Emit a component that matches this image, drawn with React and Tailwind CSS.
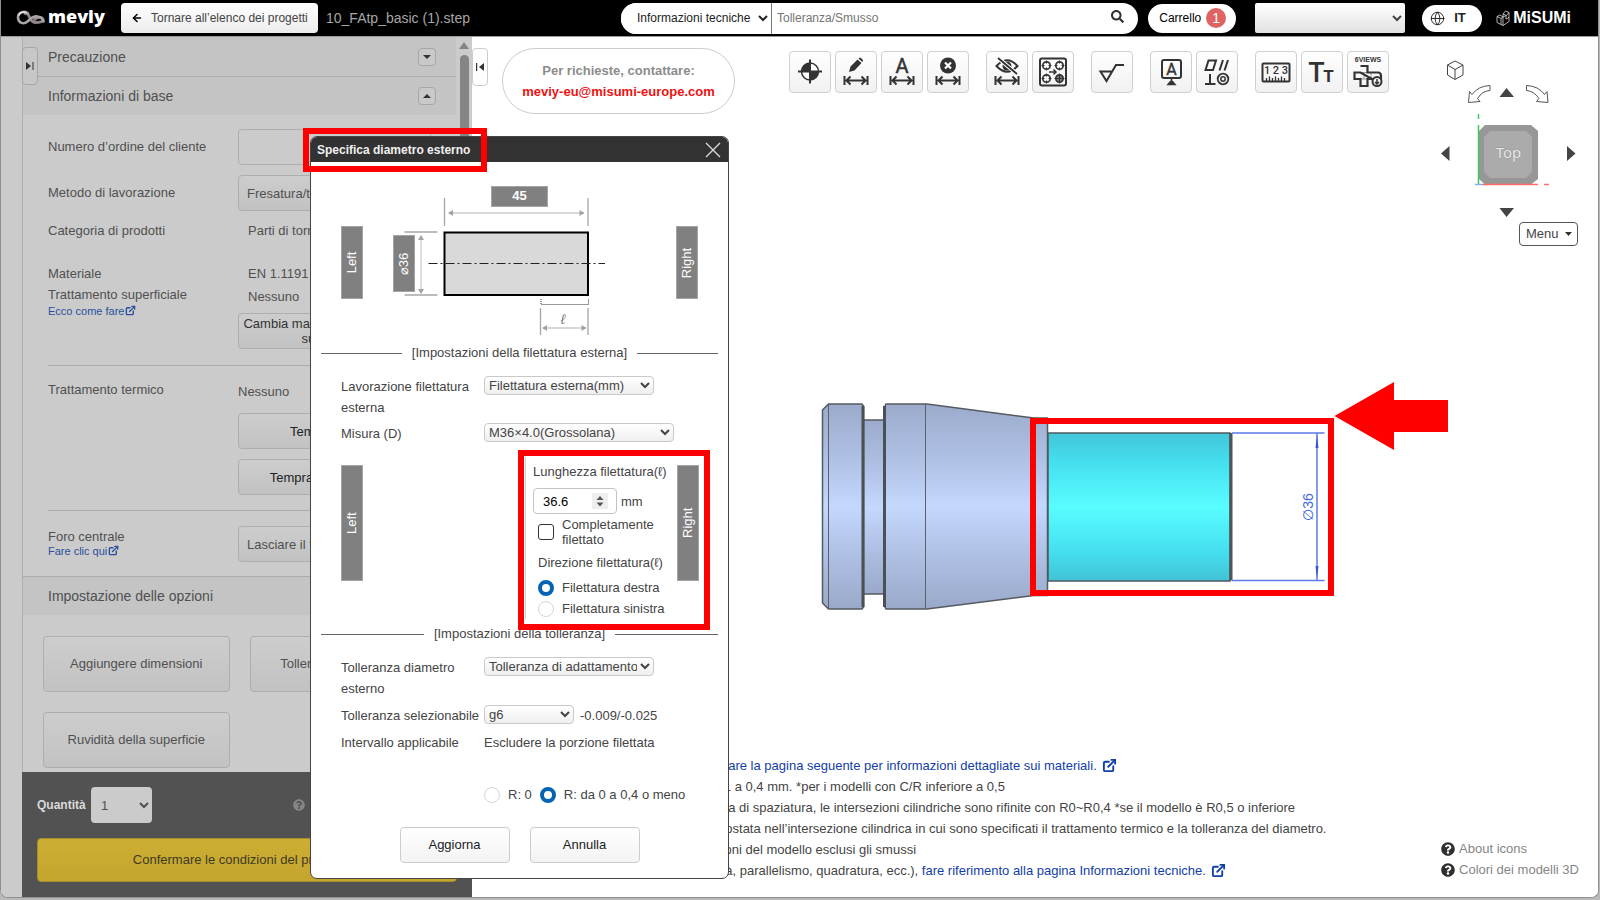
import React, { useState } from 'react'
import { Globe, ArrowLeft, ExternalLink } from 'lucide-react'
import { FaQuestionCircle, FaSearch } from 'react-icons/fa'

const softButton = 'border border-[#aeaeae] rounded-sm bg-linear-to-b from-[#cdcdcd] to-[#c2c2c2] text-[13px]'
const dialogSelect = 'h-[19px] border border-[#c9c9c9] rounded-sm bg-linear-to-b from-white to-[#efefef] text-[13px] leading-4 text-[#444]'
const radio = 'appearance-none size-4 shrink-0 rounded-full border border-[#d5d5d5] bg-white checked:border-4 checked:border-[#0463b3]'

export default function App() {
    return (
        <div className="h-screen bg-[#b9b9b9] pb-[2px] pr-px font-['Liberation_Sans',Arial,sans-serif] text-[13px] text-[#444]">
            <div className="relative flex flex-col h-full overflow-hidden rounded-b-lg border-l border-r border-b border-[#8f8f8f] bg-white">
                <Header />
                <div className="flex flex-1 min-h-0">
                    <Sidebar />
                    <Canvas />
                </div>
                <DiameterDialog />
            </div>
        </div>
    )
}

function Header() {
    return (
        <header className="flex items-center h-[37px] shrink-0 border-b border-[#9a9a9a] bg-black pl-[15px] pr-[27px]">
            <div className="flex items-center w-[105px] text-white">
                <svg viewBox="0 0 30 16" className="w-[30px] h-4" fill="none">
                    <path d="M9 3.500C14.500 2.500 13 12.500 19 12.500C23 12.500 27.500 12 27 9.500C26 6.500 22 7 18.500 9.500" stroke="#8d8589" strokeWidth="2.800" strokeLinecap="round" />
                    <path d="M12 3.500C9 .8 2 1.500 2 7.500C2.200 13.500 8 14.500 11.500 11.500C14.500 9 17 5.500 21.500 6.500C25 7 27 9 27.500 11.500" stroke="#aaa3a7" strokeWidth="2.600" strokeLinecap="round" />
                    <path d="M3 5C4 2 8 1.500 10 2.500" stroke="#e8e4e6" strokeWidth="1.500" strokeLinecap="round" />
                </svg>
                <span className="ml-[2px] mb-1 font-['Open_Sans',sans-serif] text-lg leading-6 font-extrabold">meviy</span>
            </div>
            <button className="flex items-center h-[30px] w-[197px] rounded-sm bg-linear-to-b from-white to-[#ececec] pl-[10px] text-xs text-[#444] whitespace-nowrap">
                <ArrowLeft className="w-3 h-4 mr-2 text-black" strokeWidth={3} />
                Tornare all’elenco dei progetti
            </button>
            <span className="ml-2 w-[295px] shrink-0 text-sm text-[#a6a6a6]">10_FAtp_basic (1).step</span>
            <div className="flex items-center flex-1 h-[31px] rounded-full bg-white text-xs overflow-hidden">
                <select aria-label="Ambito" className="h-full w-[151px] bg-white border-r border-[#777] pl-3 text-[#222]">
                    <option>Informazioni tecniche</option>
                </select>
                <input aria-label="Cerca" defaultValue="Tolleranza/Smusso" className="flex-1 h-full min-w-0 pl-[5px] text-[#757575] outline-none" />
                <button aria-label="Avvia ricerca" className="mr-[14px] mb-1">
                    <FaSearch className="size-[13px] text-[#333]" />
                </button>
            </div>
            <button className="ml-[10px] flex items-center h-[29px] w-[88px] rounded-full bg-white pl-[11px] text-xs text-black">
                Carrello
                <span className="ml-[5px] flex items-center justify-center size-5 rounded-full bg-[#e06363] text-white text-sm">1</span>
            </button>
            <select aria-label="Account" className="ml-[19px] h-[30px] w-[150px] rounded-xs bg-linear-to-b from-white to-[#e2e2e2] text-xs">
                <option></option>
            </select>
            <button className="ml-[17px] flex items-center h-[27px] w-[60px] rounded-full bg-white pl-2 text-[13px] font-bold text-[#222]">
                <Globe className="size-[15px] mr-[9px]" strokeWidth={1.5} />
                IT
            </button>
            <div className="ml-[14px] flex items-center text-white">
                <svg viewBox="0 0 14 17" className="w-[14px] h-[17px] mr-[3px]" fill="none" stroke="#ddd" strokeWidth=".8">
                    <path d="M1 6.500L4 5L7 7V15.500L1 12.500ZM1 6.500L5 8.500V14.500M7 7L10 5.500V9L13 7.500V11.500L7 15.500M7 4L9.500 1L13 2.500V7.500M7 4V7M7 4L10.500 5.500L13 2.500M5 8.500L7 7" />
                </svg>
                <span className="text-base leading-5 font-bold">MiSUMi</span>
            </div>
        </header>
    )
}

function HelpLink({ href, className, children }) {
    return (
        <a href={href} className={className}>
            {children}
            <ExternalLink className="inline-block size-[11px] ml-px align-[-1px]" strokeWidth={3} />
        </a>
    )
}

function SectionBar({ title, open, first }) {
    return (
        <div className={`flex items-center justify-between h-[39px] bg-[#c4c4c4] pl-[25px] pr-5 text-sm ${first ? '' : 'border-t border-[#acacac]'}`}>
            <h2>{title}</h2>
            <button aria-label={title} className="flex items-center justify-center size-[18px] rounded-sm border border-[#a6a6a6] bg-[#c9c9c9]">
                <svg viewBox="0 0 8 4" className="w-2 h-1"><path d={open ? 'M0 4L4 0L8 4Z' : 'M0 0L4 4L8 0Z'} fill="#333" /></svg>
            </button>
        </div>
    )
}

function Sidebar() {
    return (
        <aside className="flex w-[471px] shrink-0 bg-[#cbcbcb] text-[#505050]">
            <div className="w-[21px] shrink-0" />
            <div className="relative flex flex-col flex-1 min-w-0">
                <button aria-label="Espandi" className="absolute left-0 top-[10px] z-10 flex items-center justify-center w-4 h-[38px] rounded-sm border border-[#a6a6a6] bg-[#c7c7c7]">
                    <svg viewBox="0 0 8 8" className="size-2"><path d="M0 0L5 4L0 8ZM6.500 0H7.500V8H6.500Z" fill="#333" /></svg>
                </button>
                <div className="flex flex-1 min-h-0">
                    <div className="flex-1 min-w-0 overflow-hidden border-l border-[#b0b0b0]">
                        <SectionBar title="Precauzione" first />
                        <SectionBar title="Informazioni di base" open />
                        <div className="ml-[25px] mr-[25px] pt-[14px]">
                            <div className="flex items-center justify-between">
                                <label htmlFor="order">Numero d’ordine del cliente</label>
                                <input id="order" className="w-[193px] h-9 border border-[#aeaeae] rounded-sm" />
                            </div>
                            <div className="mt-[10px] flex items-center justify-between">
                                <label htmlFor="method">Metodo di lavorazione</label>
                                <select id="method" className={`w-[193px] h-9 pl-1 ${softButton}`}><option>Fresatura/tornitura</option></select>
                            </div>
                            <div className="mt-[9px] flex leading-[21px]">
                                <span className="w-[200px]">Categoria di prodotti</span>
                                <span>Parti di tornitura</span>
                            </div>
                            <div className="mt-[22px] flex leading-[21px]">
                                <span className="w-[200px]">Materiale</span>
                                <span>EN 1.1191 (C45E)</span>
                            </div>
                            <div className="flex justify-between">
                                <div className="w-[190px]">
                                    <div className="leading-[21px]">Trattamento superficiale</div>
                                    <HelpLink href="#superficie" className="block text-[11px] leading-3 text-[#2a4f9c]">Ecco come fare</HelpLink>
                                </div>
                                <div className="w-[193px]">
                                    <div className="pl-[10px] pt-[2px] leading-[21px]">Nessuno</div>
                                    <button className={`mt-[6px] w-full h-9 px-1 leading-[15px] whitespace-nowrap text-[#333] ${softButton}`}>
                                        Cambia materiale e trattamento<br />superficiale
                                    </button>
                                </div>
                            </div>
                            <div className="mt-4 border-t border-[#acacac] pt-[13px] flex justify-between leading-[21px]">
                                <span>Trattamento termico</span>
                                <div className="w-[193px] flex flex-col">
                                    <span className="pt-[2px]">Nessuno</span>
                                    <button className={`mt-[11px] h-9 text-[#222] ${softButton}`}>Tempra globale</button>
                                    <button className={`mt-[10px] h-9 text-[#222] ${softButton}`}>Tempra alta frequenza</button>
                                </div>
                            </div>
                            <div className="mt-[15px] border-t border-[#acacac] pt-[15px] flex items-center justify-between">
                                <div>
                                    <label htmlFor="hole" className="block leading-[15px]">Foro centrale</label>
                                    <HelpLink href="#foro" className="block text-[11px] leading-[15px] text-[#2a4f9c]">Fare clic qui</HelpLink>
                                </div>
                                <select id="hole" className={`w-[193px] h-9 pl-1 ${softButton}`}><option>Lasciare il foro centrale</option></select>
                            </div>
                        </div>
                        <div className="mt-[14px]">
                            <SectionBar title="Impostazione delle opzioni" open />
                        </div>
                        <div className="grid grid-cols-2 gap-5 px-5 pt-[21px]">
                            <button className={`h-14 ${softButton}`}>Aggiungere dimensioni</button>
                            <button className={`h-14 ${softButton}`}>Tolleranza dimensioni</button>
                            <button className={`h-14 ${softButton}`}>Ruvidità della superficie</button>
                        </div>
                    </div>
                    <div className="flex flex-col items-center w-4 pt-[5px]">
                        <svg viewBox="0 0 10 7" className="w-[10px] h-[7px]"><path d="M0 7L5 0L10 7Z" fill="#858585" /></svg>
                        <div className="mt-[6px] w-[9px] h-1/2 rounded-full bg-[#858585]" />
                    </div>
                </div>
                <div className="bg-[#525252] px-[15px] pt-[15px] pb-[15px]">
                    <div className="flex items-center">
                        <label htmlFor="qty" className="w-[54px] text-xs font-bold text-[#dadada]">Quantità</label>
                        <select id="qty" className="w-[61px] h-9 rounded-sm bg-[#cbcbcb] pl-[6px] pr-1 text-[13px]"><option>1</option></select>
                        <FaQuestionCircle className="ml-[141px] size-3 text-[#858585]" />
                    </div>
                    <button className="mt-[15px] block w-full h-11 rounded-sm border border-[#a68f28] bg-linear-to-b from-[#ccae33] to-[#c4a630] text-[13px] text-[#3f3a22]">
                        Confermare le condizioni del preventivo
                    </button>
                </div>
            </div>
        </aside>
    )
}

function Canvas() {
    return (
        <main className="relative flex flex-col flex-1 min-w-0 overflow-hidden bg-white">
            <div className="flex items-start pt-[11px]">
                <button aria-label="Comprimi" className="flex items-center justify-center w-4 h-[38px] rounded-sm border border-[#ccc] bg-white">
                    <svg viewBox="0 0 8 8" className="size-2"><path d="M8 0L3 4L8 8ZM0 0H1.200V8H0Z" fill="#333" /></svg>
                </button>
                <div className="ml-[14px] w-[233px] h-[66px] rounded-full border border-[#ccc] pt-[11px] text-center font-bold leading-[21px]">
                    <p className="text-[#8c8c8c]">Per richieste, contattare:</p>
                    <a href="mailto:meviy-eu@misumi-europe.com" className="text-[#ee1111]">meviy-eu@misumi-europe.com</a>
                </div>
                <Toolbar />
            </div>

            <ViewCube />
            <Model />

            <div className="mt-auto mb-4 ml-[215px] leading-[21px] whitespace-nowrap">
                <p>
                    <NoteLink href="#materiali">consultare la pagina seguente per informazioni dettagliate sui materiali.</NoteLink>
                </p>
                <p>C/R 0,1 a 0,4 mm. *per i modelli con C/R inferiore a 0,5</p>
                <p>apertura di spaziatura, le intersezioni cilindriche sono rifinite con R0~R0,4 *se il modello è R0,5 o inferiore</p>
                <p>va impostata nell’intersezione cilindrica in cui sono specificati il trattamento termico e la tolleranza del diametro.</p>
                <p>variazioni del modello esclusi gli smussi</p>
                <p>
                    linearità, parallelismo, quadratura, ecc.),{' '}
                    <NoteLink href="#tecniche">fare riferimento alla pagina Informazioni tecniche.</NoteLink>
                </p>
            </div>

            <div className="absolute right-[19px] bottom-[17px] leading-[21px] text-[#858585]">
                <a href="#icone" className="flex items-center gap-1"><FaQuestionCircle className="size-[14px] text-[#2e2e2e]" />About icons</a>
                <a href="#colori" className="flex items-center gap-1"><FaQuestionCircle className="size-[14px] text-[#2e2e2e]" />Colori dei modelli 3D</a>
            </div>
        </main>
    )
}

function NoteLink({ href, children }) {
    return (
        <a href={href} className="text-[#1240a8]">
            {children}
            <ExternalLink className="inline-block size-[15px] ml-[5px] align-[-3px]" strokeWidth={3} />
        </a>
    )
}

/* width arrow shared by the dimension tools */
const Span = () => (
    <path d="M9.500 25V34M32.500 25V34M12 29.500H30M15.500 25.500L11.500 29.500L15.500 33.500M26.500 25.500L30.500 29.500L26.500 33.500" fill="none" stroke="#333" strokeWidth="2" />
)

const TOOL_GROUPS = [
    [
        { label: 'Origine', icon: <><circle cx="21" cy="20.500" r="8.500" fill="#fff" stroke="#333" strokeWidth="1.500" /><path d="M21 20.500V12A8.500 8.500 0 0 0 12.500 20.500ZM21 20.500V29A8.500 8.500 0 0 0 29.500 20.500Z" fill="#333" /><path d="M21 8.500V32.500M9 20.500H33" stroke="#333" strokeWidth="2" /></> },
        { label: 'Modifica dimensione', icon: <><path d="M14 21L15.500 15.500L22.500 8.500L26.500 12L19.500 19.500ZM23.500 7.500L25 6.500Q26 6.500 28 9Q28 10 27.300 11Z" fill="#333" /><Span /></> },
        { label: 'Testo dimensione', icon: <><text x="21" y="21.500" textAnchor="middle" fontFamily="Roboto" fontSize="20" fill="#333" stroke="#333" strokeWidth=".5">A</text><Span /></> },
        { label: 'Elimina dimensione', icon: <><circle cx="21" cy="14.500" r="8" fill="#333" /><path d="M18 11.500L24 17.500M24 11.500L18 17.500" stroke="#fff" strokeWidth="2.200" /><Span /></> },
    ],
    [
        { label: 'Nascondi dimensione', icon: <><path d="M10.500 15Q21 3.500 31.500 15Q21 26.500 10.500 15Z" fill="none" stroke="#333" strokeWidth="2" /><circle cx="21" cy="15" r="4.500" fill="#333" /><path d="M12 7L31 23" stroke="#fff" strokeWidth="4" /><path d="M12 7L31 23" stroke="#333" strokeWidth="1.800" /><Span /></> },
        { label: 'Gruppo fori', icon: <><rect x="8" y="7.500" width="26" height="27" rx="2" fill="none" stroke="#333" strokeWidth="2" /><g fill="none" stroke="#333" strokeWidth="1.700"><circle cx="14.500" cy="14.500" r="3.700" /><circle cx="27.500" cy="14.500" r="3.700" /><circle cx="14.500" cy="27.500" r="3.700" /><circle cx="27.500" cy="27.500" r="3.700" fill="#777" /></g><path d="M14.500 9.500V12.500M14.500 16.500V19.500M9.500 14.500H12.500M16.500 14.500H19.500M27.500 9.500V12.500M27.500 16.500V19.500M22.500 14.500H25.500M29.500 14.500H32.500M14.500 22.500V25.500M14.500 29.500V32.500M9.500 27.500H12.500M16.500 27.500H19.500M27.500 22.500V32.500M22.500 27.500H32.500" stroke="#333" /><path d="M17 21H24M21.500 18.500L24 21L21.500 23.500" fill="none" stroke="#333" strokeWidth="1.500" /></> },
    ],
    [
        { label: 'Rugosità', icon: <path d="M21.500 20.500H9.500L15.500 30L25 14H33" fill="none" stroke="#333" strokeWidth="2" /> },
    ],
    [
        { label: 'Riferimento', icon: <><rect x="12" y="9" width="19" height="18" rx="2" fill="none" stroke="#333" strokeWidth="2" /><text x="21.500" y="23.500" textAnchor="middle" fontFamily="Roboto" fontSize="16" fill="#333" stroke="#333" strokeWidth=".4">A</text><path d="M21.500 27V31M18 33.500L20.500 30.500H22.500L25 33.500Z" fill="#333" stroke="#333" strokeWidth="1.500" /></> },
        { label: 'Tolleranza geometrica', icon: <><path d="M9.500 19L12.500 9.500H20L17 19ZM23.500 19.500L27 9M28.500 19.500L32 9M14 23V33M9 33H19.500" fill="none" stroke="#333" strokeWidth="2" /><circle cx="27" cy="28" r="5.300" fill="none" stroke="#333" strokeWidth="1.800" /><circle cx="27" cy="28" r="2.200" fill="none" stroke="#333" strokeWidth="1.500" /></> },
    ],
    [
        { label: 'Misura', icon: <><rect x="7.500" y="12.500" width="27" height="18" rx="1" fill="none" stroke="#333" strokeWidth="2" /><text x="21" y="23" textAnchor="middle" fontFamily="Roboto" fontWeight="500" fontSize="11" fill="#333">1 2 3</text><path d="M11.500 30V27M14.500 30V25.500M17.500 30V27M20.500 30V25.500M23.500 30V27M26.500 30V25.500M29.500 30V27" stroke="#333" strokeWidth="1.300" /></> },
        { label: 'Testo', icon: <><text x="15.500" y="30.500" textAnchor="middle" fontFamily="Roboto" fontWeight="500" fontSize="27" fill="#333">T</text><text x="27.500" y="30.500" textAnchor="middle" fontFamily="Roboto" fontWeight="700" fontSize="17" fill="#333">T</text></> },
        { label: 'Sei viste', icon: <><text x="21" y="11" textAnchor="middle" fontFamily="Liberation Sans" fontWeight="700" fontSize="7" fill="#333">6VIEWS</text><path d="M17 21.500V28M24 21.500V28M13.500 21.500H20.500M13.500 28H20.500" stroke="#999" /><path d="M13.500 15H20.500V21.500H31Q34 21.500 34 25V28M25 28H20.500V35H13.500V28H7.500V21.500H13.500Z" fill="none" stroke="#333" strokeWidth="2.200" /><circle cx="30" cy="30.500" r="4.500" fill="#f5f5f5" stroke="#333" strokeWidth="2" /><path d="M30 28V33M28 31L30 33L32 31" fill="none" stroke="#333" strokeWidth="1.500" /></> },
    ],
]

function Toolbar() {
    return (
        <div className="ml-[54px] mt-[3px] flex gap-[17px]">
            {TOOL_GROUPS.map((group, i) => (
                <div key={i} className="flex gap-1">
                    {group.map(tool => (
                        <button key={tool.label} aria-label={tool.label} className="size-[42px] rounded-sm border border-[#cfcfcf] bg-linear-to-b from-white to-[#f1f1f1]">
                            <svg viewBox="1 1 40 40" className="size-10">{tool.icon}</svg>
                        </button>
                    ))}
                </div>
            ))}
        </div>
    )
}

function ViewCube() {
    return (
        <div className="absolute right-5 top-[19px] flex flex-col items-end">
            <svg viewBox="1435 56 143 166" className="w-[143px] h-[166px]">
                <path d="M1455 61L1463 65V75L1455 79.500L1447.500 75V65ZM1447.500 65L1455 69.500L1463 65M1455 69.500V79" fill="none" stroke="#444" />
                <path d="M1490 85.500V90.500Q1482 91 1477.500 98.500L1480 101.500L1468.500 102.500L1469.500 91.500L1472 94.500Q1478 86 1490 85.500ZM1526.500 85.500V90.500Q1534 91 1539 98.500L1536.500 101.500L1548 102.500L1547 91.500L1544.500 94.500Q1538.500 86 1526.500 85.500Z" fill="#fff" stroke="#555" />
                <path d="M1499.500 97H1514L1506.500 88ZM1499.500 208H1514L1506.500 217ZM1449.500 146V161L1441 153.500ZM1567 146V161L1575.500 153.500Z" fill="#444" />
                <path d="M1485 125H1531L1538 131V179L1531 184.500H1485L1479 179V131Z" fill="#979797" />
                <path d="M1490 131H1526L1532 137V172L1526 178H1490L1484 172V137Z" fill="#ababab" />
                <path d="M1478.500 114V119M1478.500 125V184" stroke="#3fc765" strokeWidth="1.500" />
                <path d="M1482 184.500H1538M1544 184.500H1549" stroke="#ff6b6b" strokeWidth="1.500" />
                <path d="M1475 184.500H1482" stroke="#78b4ff" strokeWidth="1.500" />
                <text x="1508.500" y="158" textAnchor="middle" fontFamily="Noto Sans" fontSize="15" fill="#e9e9e9" stroke="#777" strokeWidth=".5" paintOrder="stroke">Top</text>
            </svg>
            <button className="flex items-center justify-between w-[59px] h-6 rounded-sm border border-[#555] bg-white pl-[6px] pr-[5px] text-[13px]">
                Menu
                <svg viewBox="0 0 7 4" className="w-[7px] h-1"><path d="M0 0H7L3.500 4Z" fill="#333" /></svg>
            </button>
        </div>
    )
}

function Model() {
    return (
        <svg viewBox="0 0 660 260" className="absolute left-[328px] top-[333px] w-[660px] h-[260px]">
            <defs>
                <linearGradient id="steel" x1="0" y1="0" x2="0" y2="1">
                    <stop offset="0" stopColor="#9cabcc" />
                    <stop offset=".25" stopColor="#adbfe2" />
                    <stop offset=".5" stopColor="#c4d7fd" />
                    <stop offset=".75" stopColor="#adbfe2" />
                    <stop offset="1" stopColor="#9aa9ca" />
                </linearGradient>
                <linearGradient id="cyan" x1="0" y1="0" x2="0" y2="1">
                    <stop offset="0" stopColor="#41c6d8" />
                    <stop offset=".2" stopColor="#45dff0" />
                    <stop offset=".5" stopColor="#58fdff" />
                    <stop offset=".8" stopColor="#45dff0" />
                    <stop offset="1" stopColor="#41c3d4" />
                </linearGradient>
            </defs>
            <g fill="url(#steel)" stroke="#555a60" strokeWidth="1.500">
                <path d="M63 50H84V224H63Z" />
                <path d="M22.500 40L28.500 34H62L63.500 36V237L62 239H28.500L22.500 233Z" />
                <path d="M84.500 37L86 34H127L234 48H247.500V225.500H234L127 239H86L84.500 236Z" />
            </g>
            <path d="M28.500 34V239M125.500 34V239" stroke="#5c6168" />
            <path d="M63 36V237M84.500 36V237" stroke="#4c4f53" strokeWidth="3" />
            <path d="M248 63H430V211H248Z" fill="url(#cyan)" stroke="#4d5a5e" strokeWidth="1.500" />
            <path d="M431 63V210.500" stroke="#4f5558" strokeWidth="3" />
            <path d="M432 63H524.500M432 210.500H524.500M517 63V210.500" stroke="#5b7bea" strokeWidth="1.500" />
            <path d="M517 65L515.500 78H518.500ZM517 208L515.500 196H518.500Z" fill="#3355dd" />
            <text transform="translate(513 137) rotate(-90)" textAnchor="middle" fontFamily="Liberation Sans" fontSize="14" fill="#4468e0">∅36</text>
            <rect x="233" y="51" width="298" height="172" fill="none" stroke="#ff0000" strokeWidth="6" />
            <path d="M534.500 46L594 12V30H648V62H594V80Z" fill="#ff0000" />
        </svg>
    )
}

function Divider({ children }) {
    return (
        <div className="flex items-center gap-[10px] px-[10px] h-5 leading-5">
            <div className="flex-1 h-px bg-[#666]" />
            <h3>{children}</h3>
            <div className="flex-1 h-px bg-[#666]" />
        </div>
    )
}

function EndLabel({ children }) {
    return (
        <div className="mt-2 flex items-center justify-center w-[22px] h-[116px] border border-[#a5a5a5] bg-[#808080] text-[13px] text-white [writing-mode:vertical-rl] rotate-180">
            {children}
        </div>
    )
}

function DiameterDialog() {
    const [full, setFull] = useState(false)
    const [length, setLength] = useState(36.6)

    return (
        <div role="dialog" aria-labelledby="dialog-title" className="absolute left-[309px] top-[136px] w-[419px] rounded-[7px] border border-[#444] bg-white">
            <div className="flex items-center justify-between h-[25px] rounded-t-md bg-[#323232] pl-[6px] pr-[7px]">
                <h1 id="dialog-title" className="text-xs font-bold text-[#f0f0f0]">Specifica diametro esterno</h1>
                <button aria-label="Chiudi">
                    <svg viewBox="0 0 16 16" className="size-4"><path d="M1 1L15 15M15 1L1 15" stroke="#ddd" strokeWidth="1.300" /></svg>
                </button>
            </div>
            <div className="absolute -left-2 -top-[9px] w-[184px] h-11 border-6 border-[#ff0000]" />

            <ShaftDrawing />

            <Divider>[Impostazioni della filettatura esterna]</Divider>
            <div className="mt-[13px] ml-[30px] flex flex-col gap-[5px] leading-[21px]">
                <div className="flex items-start">
                    <label htmlFor="thread" className="w-[143px] pr-3">Lavorazione filettatura esterna</label>
                    <select id="thread" className={`w-[170px] ${dialogSelect}`}><option>Filettatura esterna(mm)</option></select>
                </div>
                <div className="flex items-start">
                    <label htmlFor="size" className="w-[143px]">Misura (D)</label>
                    <select id="size" className={`w-[190px] ${dialogSelect}`}><option>M36×4.0(Grossolana)</option></select>
                </div>
            </div>

            <div className="relative mt-[13px] ml-[30px] mr-[29px] flex items-start">
                <EndLabel>Left</EndLabel>
                <div className="ml-auto w-[152px] border-l border-[#d5d5d5] pl-[7px] pt-1 leading-[21px] whitespace-nowrap">
                    <label htmlFor="length" className="block">Lunghezza filettatura(ℓ)</label>
                    <div className="mt-[6px] flex items-center gap-1">
                        <div className="flex items-center w-[84px] h-[26px] border border-[#c4c4c4] rounded-sm pl-[9px] pr-2">
                            <input
                                id="length"
                                value={length}
                                onChange={e => setLength(e.target.value)}
                                className="w-[49px] text-[13px] text-black outline-none"
                            />
                            <svg viewBox="0 0 16 16" className="size-4"><rect width="16" height="16" fill="#efefef" /><path d="M4.500 7L8 3L11.500 7ZM4.500 9.500L8 13.500L11.500 9.500Z" fill="#555" /></svg>
                        </div>
                        <span>mm</span>
                    </div>
                    <label className="mt-[3px] ml-[5px] flex items-center gap-2 leading-[15px]">
                        <input type="checkbox" checked={full} onChange={e => setFull(e.target.checked)} className="appearance-none size-4 shrink-0 rounded-[3px] border border-[#333] bg-white checked:bg-[#0463b3]" />
                        <span>Completamente<br />filettato</span>
                    </label>
                    <fieldset className="mt-[5px] ml-[5px]">
                        <legend className="mb-1">Direzione filettatura(ℓ)</legend>
                        <label className="flex items-center gap-2"><input type="radio" name="direction" defaultChecked className={radio} />Filettatura destra</label>
                        <label className="flex items-center gap-2"><input type="radio" name="direction" className={radio} />Filettatura sinistra</label>
                    </fieldset>
                </div>
                <EndLabel>Right</EndLabel>
                <div className="pointer-events-none absolute -top-[7px] -right-[11px] z-10 w-48 h-[180px] border-6 border-[#ff0000]" />
            </div>

            <div className="mt-[5px]">
                <Divider>[Impostazioni della tolleranza]</Divider>
            </div>
            <div className="mt-[13px] ml-[30px] flex flex-col gap-[6px] leading-[21px]">
                <div className="flex items-start">
                    <label htmlFor="tolerance" className="w-[143px] pr-3">Tolleranza diametro esterno</label>
                    <select id="tolerance" className={`w-[170px] ${dialogSelect}`}><option>Tolleranza di adattamento</option></select>
                </div>
                <div className="flex items-start">
                    <label htmlFor="grade" className="w-[143px] whitespace-nowrap">Tolleranza selezionabile</label>
                    <select id="grade" className={`w-[90px] ${dialogSelect}`}><option>g6</option></select>
                    <span className="ml-[6px]">-0.009/-0.025</span>
                </div>
                <div className="flex">
                    <span className="w-[143px]">Intervallo applicabile</span>
                    <span>Escludere la porzione filettata</span>
                </div>
            </div>
            <div className="mt-8 ml-[173px] flex gap-2 leading-5">
                <label className="flex items-center gap-2"><input type="radio" name="corner" className={radio} />R: 0</label>
                <label className="flex items-center gap-2"><input type="radio" name="corner" defaultChecked className={radio} />R: da 0 a 0,4 o meno</label>
            </div>
            <div className="mt-[22px] mb-[15px] flex justify-center gap-5">
                <button className="w-[110px] h-9 border border-[#ccc] rounded-sm bg-linear-to-b from-white to-[#f3f3f3] text-[#222]">Aggiorna</button>
                <button className="w-[110px] h-9 border border-[#ccc] rounded-sm bg-linear-to-b from-white to-[#f3f3f3] text-[#222]">Annulla</button>
            </div>
        </div>
    )
}

function ShaftDrawing() {
    return (
        <svg viewBox="311 162 417 181" className="block w-full h-[181px]" fontFamily="Liberation Sans" fontSize="13">
            <g fill="#808080" stroke="#a5a5a5">
                <rect x="341.500" y="226.500" width="21" height="72" />
                <rect x="676.500" y="226.500" width="21" height="72" />
                <rect x="393.500" y="235.500" width="21" height="56" />
                <rect x="491.500" y="186.500" width="56" height="20" />
            </g>
            <g fill="#fff" textAnchor="middle">
                <text x="519.500" y="200" fontWeight="700">45</text>
                <text transform="translate(355.500 262.500) rotate(-90)">Left</text>
                <text transform="translate(691 263) rotate(-90)">Right</text>
                <text transform="translate(407.500 264) rotate(-90)">⌀36</text>
            </g>
            <rect x="444.500" y="232.500" width="143.500" height="62.500" fill="#d9d9d9" stroke="#000" strokeWidth="2" />
            <path d="M428.500 263.500H605" stroke="#222" strokeDasharray="9 3 2 3" />
            <g fill="none" stroke="#a6a6a6" strokeWidth="1.300">
                <path d="M444.500 198V226M588 198V226M404.500 232H437.500M404.500 295H437.500M540.500 308V335M588 308V335" />
                <path d="M449 213H584M421 236V293M543 328H586" stroke="#ccc" />
            </g>
            <path d="M448 213L453 210V216ZM584.500 213L579.500 210V216ZM421 235L418 240H424ZM421 294L418 289H424ZM542 328L547 325V331ZM586.500 328L581.500 325V331Z" fill="#a3a3a3" />
            <path d="M541 299V304.500H588.500V299" fill="none" stroke="#333" strokeDasharray="1 1" />
            <text x="563" y="324" textAnchor="middle" fontSize="14" fontStyle="italic" fill="#777">ℓ</text>
        </svg>
    )
}
